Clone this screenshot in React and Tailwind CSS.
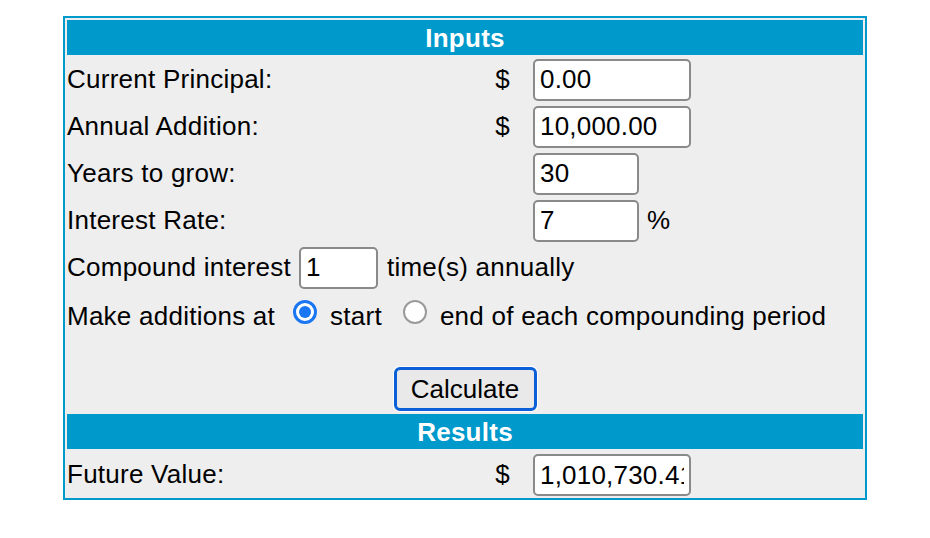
import React from "react";

const inputCls =
  "h-[42px] border-2 border-[#8a8a8a] rounded-[5px] bg-white px-[5px] text-[26px] leading-[1.15] tracking-[0.2px] text-black outline-none";

function RadioOn() {
  return (
    <span className="block w-[24px] h-[24px] shrink-0 rounded-full border-[3px] border-[#1a76f2] bg-white">
      <span className="flex w-full h-full items-center justify-center">
        <span className="block w-[12px] h-[12px] rounded-full bg-[#1a76f2]" />
      </span>
    </span>
  );
}

function RadioOff() {
  return (
    <span className="block w-[24px] h-[24px] shrink-0 rounded-full border-2 border-[#9a9a9a] bg-white" />
  );
}

export default function App() {
  return (
    <div className="w-[930px] h-[538px] bg-white pt-[16px] pl-[63px] font-['Liberation_Sans',Arial,sans-serif] text-[26px] leading-[1.15] tracking-[0.25px] text-black">
      <table className="w-[804px] table-fixed border-separate border-spacing-[2px] border-2 border-[#0099cc] bg-[#eeeeee]">
        <colgroup>
          <col className="w-[403px]" />
          <col className="w-[57px]" />
          <col className="w-[332px]" />
        </colgroup>
        <tbody>
          <tr>
            <td colSpan={3} className="h-[35px] p-0 bg-[#0099cc] text-white font-bold text-center leading-none">
              Inputs
            </td>
          </tr>
          <tr>
            <td className="h-[45px] p-0">Current Principal:</td>
            <td className="h-[45px] p-0 pr-[19px] text-right">$</td>
            <td className="h-[45px] p-0 pl-[2px]">
              <input className={inputCls + " w-[158px] block"} defaultValue="0.00" />
            </td>
          </tr>
          <tr>
            <td className="h-[45px] p-0">Annual Addition:</td>
            <td className="h-[45px] p-0 pr-[19px] text-right">$</td>
            <td className="h-[45px] p-0 pl-[2px]">
              <input className={inputCls + " w-[158px] block"} defaultValue="10,000.00" />
            </td>
          </tr>
          <tr>
            <td className="h-[45px] p-0">Years to grow:</td>
            <td className="h-[45px] p-0" />
            <td className="h-[45px] p-0 pl-[2px]">
              <input className={inputCls + " w-[106px] block"} defaultValue="30" />
            </td>
          </tr>
          <tr>
            <td className="h-[45px] p-0">Interest Rate:</td>
            <td className="h-[45px] p-0" />
            <td className="h-[45px] p-0 pl-[2px]">
              <div className="flex items-center">
                <input className={inputCls + " w-[106px]"} defaultValue="7" />
                <span className="ml-[8px]">%</span>
              </div>
            </td>
          </tr>
          <tr>
            <td colSpan={3} className="h-[45px] p-0">
              <div className="flex items-center">
                <span>Compound interest</span>
                <input className={inputCls + " w-[79px] ml-[8px]"} defaultValue="1" />
                <span className="ml-[9px]">time(s) annually</span>
              </div>
            </td>
          </tr>
          <tr>
            <td colSpan={3} className="h-[40px] p-0 align-top">
              <div className="flex items-start pt-[8px]">
                <span className="mt-[2px]">Make additions at</span>
                <span className="ml-[18px]">
                  <RadioOn />
                </span>
                <span className="mt-[2px] ml-[13px]">start</span>
                <span className="ml-[21px]">
                  <RadioOff />
                </span>
                <span className="mt-[2px] ml-[13px]">end of each compounding period</span>
              </div>
            </td>
          </tr>
          <tr>
            <td colSpan={3} className="h-[29px] p-0" />
          </tr>
          <tr>
            <td colSpan={3} className="h-[47px] p-0 text-center">
              <button className="h-[44px] w-[143px] rounded-[6px] border-[3px] border-[#0b5fd7] bg-[#e9e9e9] text-[26px] tracking-normal text-black shadow-[0_0_0_1px_#ffffff] leading-none">
                Calculate
              </button>
            </td>
          </tr>
          <tr>
            <td colSpan={3} className="h-[35px] p-0 bg-[#0099cc] text-white font-bold text-center leading-none">
              Results
            </td>
          </tr>
          <tr>
            <td className="h-[45px] p-0 pt-[3px]">Future Value:</td>
            <td className="h-[45px] p-0 pt-[3px] pr-[19px] text-right">$</td>
            <td className="h-[45px] p-0 pt-[3px] pl-[2px]">
              <input className={inputCls + " w-[158px] block"} defaultValue="1,010,730.41" />
            </td>
          </tr>
        </tbody>
      </table>
    </div>
  );
}
